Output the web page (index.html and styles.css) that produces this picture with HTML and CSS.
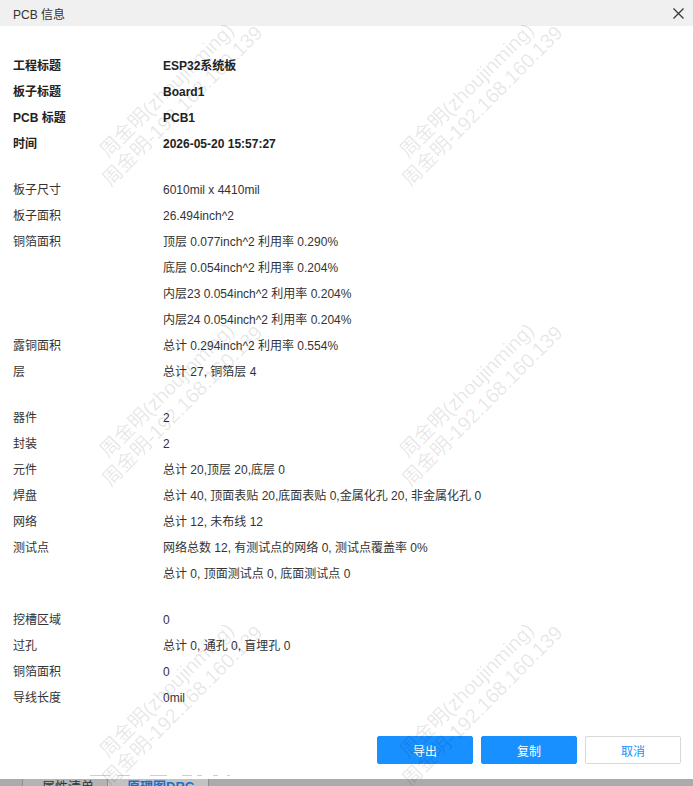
FILE: index.html
```html
<!DOCTYPE html>
<html lang="zh">
<head>
<meta charset="utf-8">
<title>PCB 信息</title>
<link rel="stylesheet" href="styles.css">
</head>
<body>
<div class="dialog">
  <div class="header">
    <span class="title">PCB 信息</span>
    <svg class="close" width="11" height="11" viewBox="0 0 11 11"><path d="M0.5 0.5L10.5 10.5M10.5 0.5L0.5 10.5" stroke="#333" stroke-width="1.2" fill="none"/></svg>
  </div>
  <div class="content">
    <div class="group strong">
      <div class="row"><span class="label">工程标题</span><span class="value">ESP32系统板</span></div>
      <div class="row"><span class="label">板子标题</span><span class="value">Board1</span></div>
      <div class="row"><span class="label">PCB 标题</span><span class="value">PCB1</span></div>
      <div class="row"><span class="label">时间</span><span class="value">2026-05-20 15:57:27</span></div>
    </div>
    <div class="group">
      <div class="row"><span class="label">板子尺寸</span><span class="value">6010mil x 4410mil</span></div>
      <div class="row"><span class="label">板子面积</span><span class="value">26.494inch^2</span></div>
      <div class="row"><span class="label">铜箔面积</span><span class="value">顶层 0.077inch^2 利用率 0.290%</span></div>
      <div class="row"><span class="label"></span><span class="value">底层 0.054inch^2 利用率 0.204%</span></div>
      <div class="row"><span class="label"></span><span class="value">内层23 0.054inch^2 利用率 0.204%</span></div>
      <div class="row"><span class="label"></span><span class="value">内层24 0.054inch^2 利用率 0.204%</span></div>
      <div class="row"><span class="label">露铜面积</span><span class="value">总计 0.294inch^2 利用率 0.554%</span></div>
      <div class="row"><span class="label">层</span><span class="value">总计 27, 铜箔层 4</span></div>
    </div>
    <div class="group">
      <div class="row"><span class="label">器件</span><span class="value">2</span></div>
      <div class="row"><span class="label">封装</span><span class="value">2</span></div>
      <div class="row"><span class="label">元件</span><span class="value">总计 20,顶层 20,底层 0</span></div>
      <div class="row"><span class="label">焊盘</span><span class="value">总计 40, 顶面表贴 20,底面表贴 0,金属化孔 20, 非金属化孔 0</span></div>
      <div class="row"><span class="label">网络</span><span class="value">总计 12, 未布线 12</span></div>
      <div class="row"><span class="label">测试点</span><span class="value">网络总数 12, 有测试点的网络 0, 测试点覆盖率 0%</span></div>
      <div class="row"><span class="label"></span><span class="value">总计 0, 顶面测试点 0, 底面测试点 0</span></div>
    </div>
    <div class="group">
      <div class="row"><span class="label">挖槽区域</span><span class="value">0</span></div>
      <div class="row"><span class="label">过孔</span><span class="value">总计 0, 通孔 0, 盲埋孔 0</span></div>
      <div class="row"><span class="label">铜箔面积</span><span class="value">0</span></div>
      <div class="row"><span class="label">导线长度</span><span class="value">0mil</span></div>
    </div>
  </div>
  <div class="footer">
    <button class="btn primary">导出</button>
    <button class="btn primary">复制</button>
    <button class="btn ghost">取消</button>
  </div>
  <div class="trace"></div>
</div>
<div class="tabbar">
  <span class="tab-lead"></span>
  <span class="tab">属性清单</span>
  <span class="tab active">原理图DRC</span>
</div>
<div class="wm-layer">
  <div class="watermarks">
    <div class="cell"><div class="wm"><div>周金明(zhoujinming)</div><div>周金明-192.168.160.139</div></div></div>
    <div class="cell"><div class="wm"><div>周金明(zhoujinming)</div><div>周金明-192.168.160.139</div></div></div>
    <div class="cell"><div class="wm"><div>周金明(zhoujinming)</div><div>周金明-192.168.160.139</div></div></div>
    <div class="cell"><div class="wm"><div>周金明(zhoujinming)</div><div>周金明-192.168.160.139</div></div></div>
    <div class="cell"><div class="wm"><div>周金明(zhoujinming)</div><div>周金明-192.168.160.139</div></div></div>
    <div class="cell"><div class="wm"><div>周金明(zhoujinming)</div><div>周金明-192.168.160.139</div></div></div>
    <div class="cell"><div class="wm"><div>周金明(zhoujinming)</div><div>周金明-192.168.160.139</div></div></div>
    <div class="cell"><div class="wm"><div>周金明(zhoujinming)</div><div>周金明-192.168.160.139</div></div></div>
    <div class="cell"><div class="wm"><div>周金明(zhoujinming)</div><div>周金明-192.168.160.139</div></div></div>
  </div>
</div>
</body>
</html>
```

FILE: styles.css
```css
* { box-sizing: border-box; }
html, body { margin: 0; padding: 0; }
body {
  width: 693px;
  height: 786px;
  overflow: hidden;
  position: relative;
  background: #ababab;
  font-family: "Liberation Sans", "Noto Sans CJK SC", sans-serif;
  font-size: 12px;
  color: #333;
}
.dialog {
  height: 779px;
  background: #fff;
  display: flex;
  flex-direction: column;
  padding-bottom: 3px;
}
.header {
  height: 26px;
  flex: none;
  background: #f0f0f0;
  display: flex;
  align-items: center;
  justify-content: space-between;
  padding: 0 9px 0 13px;
}
.title { font-size: 12px; color: #333; }
.close { display: block; }
.content { padding: 27px 13px 0; }
.group { margin-bottom: 20px; }
.group:last-child { margin-bottom: 0; }
.row {
  display: grid;
  grid-template-columns: 150px 1fr;
  height: 26px;
  line-height: 26px;
  white-space: nowrap;
}
.strong .row { font-weight: bold; color: #222; }
.footer {
  margin-top: auto;
  display: flex;
  justify-content: flex-end;
  gap: 8px;
  padding: 0 12px 11px;
}
.btn {
  width: 96px;
  height: 28px;
  border-radius: 2px;
  font-family: "Liberation Sans", "Noto Sans CJK SC", sans-serif;
  font-size: 12px;
  padding: 0;
  cursor: pointer;
}
.primary { background: #1890ff; border: 1px solid #1890ff; color: #fff; }
.ghost { background: #fff; border: 1px solid #d9d9d9; color: #1890ff; }
.trace {
  height: 1px;
  width: 140px;
  margin-left: 90px;
  flex: none;
  background: linear-gradient(to right,
    #cfcfcf 0 20px, transparent 20px 28px,
    #cfcfcf 28px 40px, transparent 40px 60px,
    #cfcfcf 60px 77px, transparent 77px 92px,
    #cfcfcf 92px 102px, transparent 102px 107px,
    #cfcfcf 107px 112px, transparent 112px 123px,
    #cfcfcf 123px 128px, transparent 128px 137px,
    #cfcfcf 137px 140px);
}
.tabbar {
  height: 7px;
  display: flex;
  overflow: hidden;
  background: #ababab;
}
.tab-lead { width: 22px; flex: none; }
.tab {
  flex: none;
  height: 7px;
  overflow: hidden;
  border-left: 1px solid #8f8f8f;
  padding: 1px 0 0 19px;
  font-size: 13px;
  line-height: 14px;
  color: #333;
  background: #b3b3b3;
  width: 85px;
}
.tab.active {
  width: 102px;
  background: #c2c2c2;
  color: #1a6fc9;
  font-weight: bold;
  border-right: 1px solid #8f8f8f;
}
.wm-layer {
  position: absolute;
  left: 0;
  top: 0;
  width: 693px;
  height: 786px;
  overflow: hidden;
  pointer-events: none;
}
.watermarks {
  position: absolute;
  left: 24px;
  top: -52px;
  display: grid;
  grid-template-columns: repeat(3, 300px);
  grid-auto-rows: 300px;
}
.cell {
  display: flex;
  align-items: center;
  justify-content: center;
}
.wm {
  transform: rotate(-45deg);
  text-align: center;
  white-space: nowrap;
  font-size: 20px;
  line-height: 22px;
  color: rgba(0, 0, 0, 0.1);
}
```
